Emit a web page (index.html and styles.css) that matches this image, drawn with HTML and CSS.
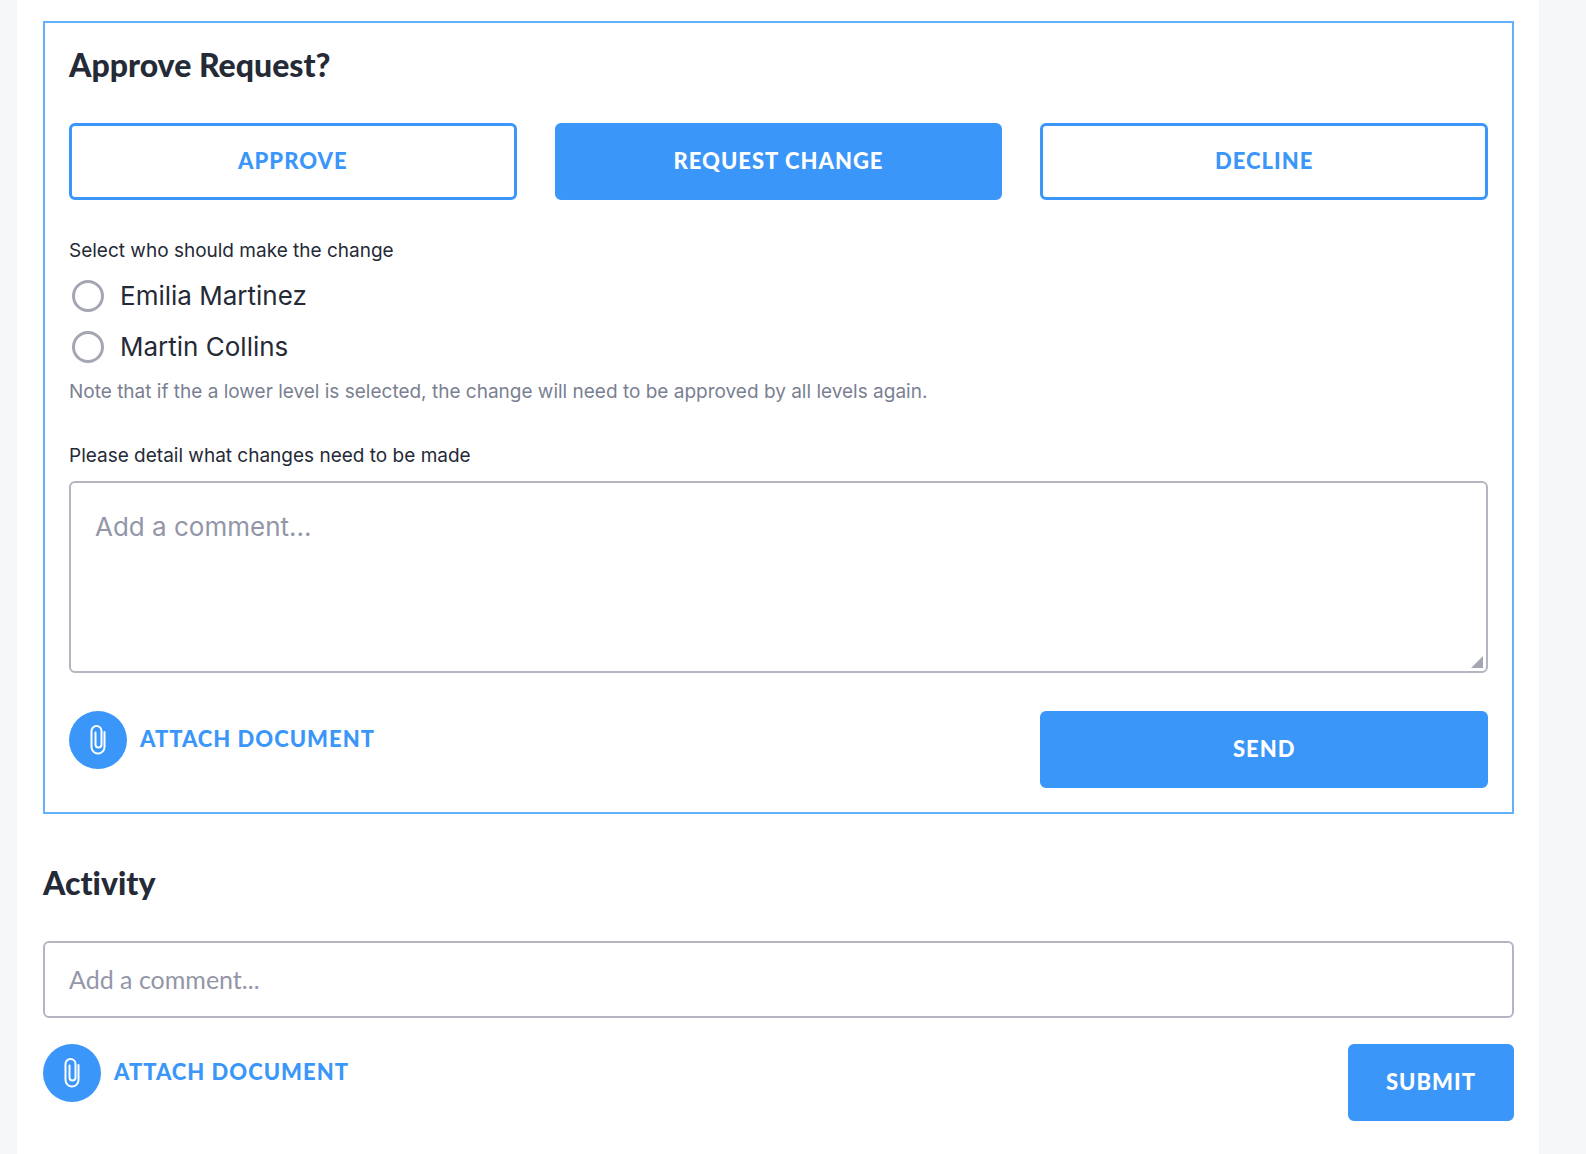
FILE: index.html
```
<!DOCTYPE html>
<html lang="en">
<head>
    <meta charset="UTF-8">
    <meta name="viewport" content="width=device-width, initial-scale=1.0">
    <title>Approve Request</title>
    <link rel="stylesheet" href="styles.css">
</head>
<body>
    <main class="page">
        <form class="approval">
            <h2>Approve Request?</h2>
            <div class="choices">
                <button type="button" class="btn btn-outline">APPROVE</button>
                <button type="button" class="btn">REQUEST CHANGE</button>
                <button type="button" class="btn btn-outline">DECLINE</button>
            </div>

            <fieldset class="assignee">
                <legend>Select who should make the change</legend>
                <label class="option">
                    <input type="radio" name="assignee" value="emilia">
                    Emilia Martinez
                </label>
                <label class="option">
                    <input type="radio" name="assignee" value="martin">
                    Martin Collins
                </label>
            </fieldset>
            <p class="note">Note that if the a lower level is selected, the change will need to be approved by all levels again.</p>

            <label class="field-label" for="changes">Please detail what changes need to be made</label>
            <textarea id="changes" name="changes" placeholder="Add a comment..."></textarea>

            <div class="actions">
                <button type="button" class="attach">
                    <span class="attach-icon">
                        <svg width="16" height="30" viewBox="0 0 16 30" aria-hidden="true">
                            <path d="M14.5 7v15a6.5 6.5 0 0 1-13 0V6a5 5 0 0 1 10 0v13.500a3 3 0 0 1-6 0V7.500"/>
                        </svg>
                    </span>
                    <span class="attach-text">ATTACH DOCUMENT</span>
                </button>
                <button type="submit" class="btn send">SEND</button>
            </div>
        </form>

        <form class="activity">
            <h2>Activity</h2>
            <input type="text" name="comment" aria-label="Add a comment" placeholder="Add a comment...">
            <div class="actions">
                <button type="button" class="attach">
                    <span class="attach-icon">
                        <svg width="16" height="30" viewBox="0 0 16 30" aria-hidden="true">
                            <path d="M14.5 7v15a6.5 6.5 0 0 1-13 0V6a5 5 0 0 1 10 0v13.500a3 3 0 0 1-6 0V7.500"/>
                        </svg>
                    </span>
                    <span class="attach-text">ATTACH DOCUMENT</span>
                </button>
                <button type="submit" class="btn submit">SUBMIT</button>
            </div>
        </form>
    </main>
</body>
</html>
```
FILE: styles.css
```
* {
    box-sizing: border-box;
}

body {
    margin: 0;
    padding: 0 47px 0 17px;
    background: #f6f7f9;
    color: #252a37;
    font-family: Inter, sans-serif;
    font-size: 19px;
    line-height: 24px;
}

.page {
    min-height: 100vh;
    padding: 21px 25px 32px 26px;
    background: #fff;
}

h2 {
    margin: 0 0 41px;
    font-family: Lato, sans-serif;
    font-size: 32px;
    font-weight: 900;
    font-variant-ligatures: none;
    line-height: 35px;
}

.approval {
    padding: 24px;
    border: 2px solid #64b1fb;
}

.choices {
    display: grid;
    grid-template-columns: repeat(3, 1fr);
    gap: 38px;
    margin-bottom: 39px;
}

.btn {
    height: 77px;
    padding: 0 35px 3px;
    border: 3px solid #3a96f8;
    border-radius: 6px;
    background: #3a96f8;
    color: #fff;
    font-family: Lato, sans-serif;
    font-size: 22px;
    font-weight: 900;
    letter-spacing: 1px;
    cursor: pointer;
}

.btn-outline {
    background: #fff;
    color: #3a96f8;
}

.assignee {
    margin: 0;
    padding: 0;
    border: 0;
}

legend {
    padding: 0 0 7px;
}

.option {
    display: flex;
    align-items: center;
    gap: 16px;
    height: 51px;
    padding-left: 3px;
    font-size: 26px;
}

.option input {
    appearance: none;
    width: 32px;
    height: 32px;
    margin: 0;
    border: 3px solid #a5a6b4;
    border-radius: 50%;
}

.option input:checked {
    border: 10px solid #3a96f8;
}

.note {
    margin: 8px 0 40px;
    color: #7a7f92;
}

.field-label {
    display: block;
    margin-bottom: 13px;
}

textarea,
input[type="text"] {
    display: block;
    width: 100%;
    padding: 24px;
    border: 2px solid #b4b5c1;
    border-radius: 6px;
    background: #fff;
    color: #252a37;
    font-family: Inter, sans-serif;
    font-size: 26px;
    line-height: 40px;
}

textarea {
    height: 192px;
    resize: vertical;
}

textarea::-webkit-resizer {
    background: linear-gradient(135deg, transparent 47%, #a5a6b4 53%) 0 0 / 12px 12px no-repeat;
}

input[type="text"] {
    height: 77px;
    padding: 0 24px 2px;
    font-family: Lato, sans-serif;
    font-size: 25px;
}

::placeholder {
    color: #9396a8;
}

.actions {
    display: flex;
    justify-content: space-between;
    align-items: flex-start;
    margin-top: 38px;
}

.attach {
    display: flex;
    align-items: center;
    gap: 13px;
    padding: 0;
    border: 0;
    background: none;
    color: #3a96f8;
    font-family: Lato, sans-serif;
    font-size: 22px;
    font-weight: 900;
    letter-spacing: 1px;
    cursor: pointer;
}

.attach-text {
    padding-bottom: 3px;
}

.attach-icon {
    display: flex;
    align-items: center;
    justify-content: center;
    width: 58px;
    height: 58px;
    border-radius: 50%;
    background: #3a96f8;
}

.attach-icon path {
    fill: none;
    stroke: #fff;
    stroke-width: 2;
    stroke-linecap: round;
}

/* same width as one column of .choices */
.send {
    width: calc((100% - 76px) / 3);
}

.activity {
    margin-top: 51px;
}

.activity .actions {
    margin-top: 26px;
}
```
